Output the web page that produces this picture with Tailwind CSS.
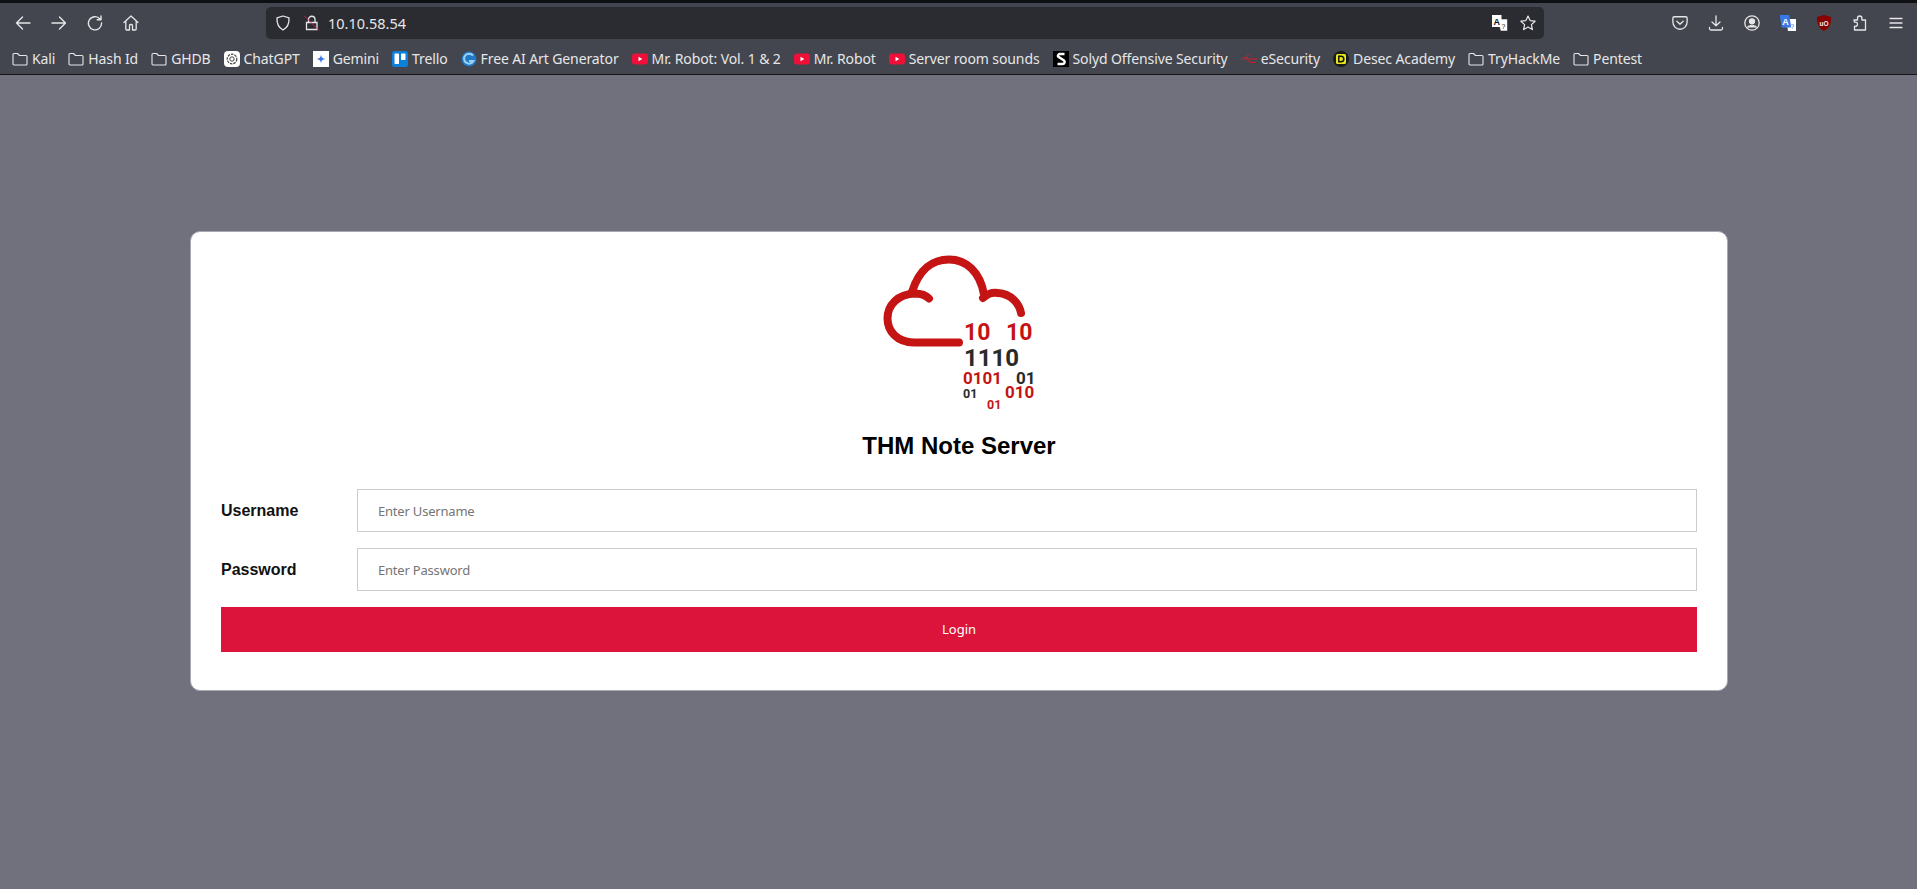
<!DOCTYPE html>
<html lang="en">
<head>
    <meta charset="UTF-8">
    <title>THM Note Server</title>
    <script src="https://cdn.jsdelivr.net/npm/@tailwindcss/browser@4"></script>
</head>
<body class="bg-[#71717d] h-[889px] overflow-hidden font-['Noto_Sans',sans-serif]">
    <!-- browser chrome -->
    <header class="h-[75px] bg-[#43464e] border-b border-[#15161a] text-[#e6e6e8]">
        <div class="h-[3px] bg-[#0f1013]"></div>
        <div class="h-[40px] flex items-center">
            <div class="w-[266px] flex items-center pl-[15px] gap-[20px] text-[#e6e6e8]">
                <svg class="w-[16px] h-[16px]" viewBox="0 0 16 16" fill="none" stroke="currentColor" stroke-width="1.4" stroke-linecap="round" stroke-linejoin="round"><path d="M15 8H1.500M7.500 2 1.500 8l6 6"/></svg>
                <svg class="w-[16px] h-[16px]" viewBox="0 0 16 16" fill="none" stroke="currentColor" stroke-width="1.4" stroke-linecap="round" stroke-linejoin="round"><path d="M1 8h13.500M8.500 2l6 6-6 6"/></svg>
                <svg class="w-[16px] h-[16px]" viewBox="0 0 16 16" fill="none" stroke="currentColor" stroke-width="1.4" stroke-linecap="round" stroke-linejoin="round"><path d="M13.200 4.200A6.600 6.600 0 1 0 14.600 8M14 1v3.800h-3.800"/></svg>
                <svg class="w-[16px] h-[16px]" viewBox="0 0 16 16" fill="none" stroke="currentColor" stroke-width="1.300" stroke-linecap="round" stroke-linejoin="round"><path d="M1 7.500 8 1l7 6.500M2.800 6v8a1 1 0 0 0 1 1h2.700v-4.500a1 1 0 0 1 1-1h1a1 1 0 0 1 1 1V15h2.700a1 1 0 0 0 1-1V6"/></svg>
            </div>
            <div class="w-[1278px] h-[32px] rounded-[5px] bg-[#2b2c31] flex items-center pl-[9px] pr-[8px]">
                <svg class="w-[16px] h-[16px]" viewBox="0 0 16 16" fill="none" stroke="currentColor" stroke-width="1.300" stroke-linejoin="round"><path d="M8 1 2 2.800c-.3 5.500 1 9.700 6 12.200 5-2.500 6.300-6.700 6-12.200z"/></svg>
                <svg class="w-[16px] h-[16px] ml-[13px]" viewBox="0 0 16 16" fill="none" stroke-linecap="round"><path d="M4.500 7V4.500a3 3 0 0 1 6.500 0V7M2.500 7.500h10.500v7H2.500z" stroke="currentColor" stroke-width="1.300"/><path d="M.5 1 14.500 15" stroke="#e22850" stroke-width=".8"/></svg>
                <span class="ml-[8px] text-[14.5px] leading-none">10.10.58.54</span>
                <div class="ml-auto flex items-center gap-[12px]">
                    <svg class="w-[16px] h-[16px]" viewBox="0 0 16 16"><path d="M5.500 4h10v12h-7z" fill="#fff" stroke="#2b2c31" stroke-width=".6"/><path d="M0 0h9.500v12H0z" fill="#fff"/><text x="1.500" y="9.500" font-size="9" font-weight="700" font-family="Liberation Sans" fill="#111">A</text><text x="9.500" y="13.500" font-size="7" font-family="Liberation Sans" fill="#111">?</text></svg>
                    <svg class="w-[16px] h-[16px]" viewBox="0 0 16 16" fill="none" stroke="currentColor" stroke-width="1.200" stroke-linejoin="round"><path d="m8 1 2.100 4.600 5 .6-3.700 3.400 1 5L8 12.100l-4.400 2.500 1-5L.9 6.200l5-.6z"/></svg>
                </div>
            </div>
            <div class="flex-1 flex items-center pl-[128px] gap-[20px]">
                <svg class="w-[16px] h-[16px]" viewBox="0 0 18 18" fill="none" stroke="currentColor" stroke-width="1.500" stroke-linecap="round" stroke-linejoin="round"><path d="M2.500 2h13A1.500 1.500 0 0 1 17 3.500V8A8 8 0 0 1 1 8V3.500A1.500 1.500 0 0 1 2.500 2zM5.500 7 9 10.300 12.500 7"/></svg>
                <svg class="w-[16px] h-[16px]" viewBox="0 0 16 16" fill="none" stroke="currentColor" stroke-width="1.300" stroke-linecap="round" stroke-linejoin="round"><path d="M8 1v9.500M4 7l4 3.700L12 7M1.500 12.500v1a1.500 1.500 0 0 0 1.500 1.500h10a1.500 1.500 0 0 0 1.500-1.500v-1"/></svg>
                <svg class="w-[16px] h-[16px]" viewBox="0 0 16 16" fill="none" stroke="currentColor" stroke-width="1.300"><circle cx="8" cy="8" r="7.200"/><circle cx="8" cy="6.300" r="2.500" fill="currentColor"/><path d="M3.500 12.500c1-2.500 8-2.500 9 0" fill="currentColor"/></svg>
                <svg class="w-[16px] h-[17px]" viewBox="0 0 16 17"><path d="M6 4h10v12H8z" fill="#fff"/><path d="M0 0h9.500l2 12.500H2z" fill="#3b78e7" transform="translate(-.3 0)"/><text x="2.200" y="9.500" font-size="9" font-weight="700" font-family="Liberation Sans" fill="#fff">A</text><text x="10.300" y="14" font-size="7" font-family="Liberation Sans" fill="#3b78e7">?</text></svg>
                <svg class="w-[16px] h-[16px]" viewBox="0 0 16 16"><path d="M8 0 15 2c.3 7-2 11.500-7 14C3 13.500.7 9 1 2z" fill="#800"/><text x="8" y="10.500" text-anchor="middle" font-size="6.500" font-weight="700" font-family="Liberation Sans" fill="#eee">uO</text></svg>
                <svg class="w-[16px] h-[16px]" viewBox="0 0 16 16" fill="none" stroke="currentColor" stroke-width="1.300" stroke-linejoin="round"><path d="M2 5h3.500V3.200a2.200 2.200 0 0 1 4.400 0V5h3.600v10H2.500v-3.800c2 .5 3-.7 3-2s-1-2.500-3-2z"/></svg>
                <svg class="w-[16px] h-[16px]" viewBox="0 0 16 16" fill="none" stroke="currentColor" stroke-width="1.300" stroke-linecap="round"><path d="M2 3.500h12M2 8h12M2 12.500h12"/></svg>
            </div>
        </div>
        <nav class="h-[31px] flex items-center pl-[12px] gap-[13px] text-[14px] tracking-[-0.11px] leading-none whitespace-nowrap">
            <a class="flex items-center gap-[4px]"><svg class="w-[16px] h-[16px]" viewBox="0 0 16 16" fill="none" stroke="currentColor" stroke-width="1.100" stroke-linejoin="round"><path d="M1 3.500A1 1 0 0 1 2 2.500h3.500l2 2H14a1 1 0 0 1 1 1V13a1 1 0 0 1-1 1H2a1 1 0 0 1-1-1z"/></svg>Kali</a>
            <a class="flex items-center gap-[4px]"><svg class="w-[16px] h-[16px]" viewBox="0 0 16 16" fill="none" stroke="currentColor" stroke-width="1.100" stroke-linejoin="round"><path d="M1 3.500A1 1 0 0 1 2 2.500h3.500l2 2H14a1 1 0 0 1 1 1V13a1 1 0 0 1-1 1H2a1 1 0 0 1-1-1z"/></svg>Hash Id</a>
            <a class="flex items-center gap-[4px]"><svg class="w-[16px] h-[16px]" viewBox="0 0 16 16" fill="none" stroke="currentColor" stroke-width="1.100" stroke-linejoin="round"><path d="M1 3.500A1 1 0 0 1 2 2.500h3.500l2 2H14a1 1 0 0 1 1 1V13a1 1 0 0 1-1 1H2a1 1 0 0 1-1-1z"/></svg>GHDB</a>
            <a class="flex items-center gap-[4px]"><svg class="w-[16px] h-[16px]" viewBox="0 0 16 16"><rect width="16" height="16" rx="4" fill="#fff"/><circle cx="8" cy="8" r="4.800" fill="none" stroke="#444" stroke-width="1.200" stroke-dasharray="2.500 1"/><circle cx="8" cy="8" r="2.200" fill="none" stroke="#444"/></svg>ChatGPT</a>
            <a class="flex items-center gap-[4px]"><svg class="w-[16px] h-[16px]" viewBox="0 0 16 16"><rect width="16" height="16" fill="#fff"/><path d="M8 3.500C8.300 6.500 9.500 7.700 12.500 8 9.500 8.300 8.300 9.500 8 12.500 7.700 9.500 6.500 8.300 3.500 8 6.500 7.700 7.700 6.500 8 3.500z" fill="#3b78e7"/></svg>Gemini</a>
            <a class="flex items-center gap-[4px]"><svg class="w-[16px] h-[16px]" viewBox="0 0 16 16"><rect width="16" height="16" rx="2.500" fill="#0c7fd6"/><rect x="2.500" y="2.500" width="4.500" height="10.500" rx=".8" fill="#fff"/><rect x="9" y="2.500" width="4.500" height="6.500" rx=".8" fill="#fff"/></svg>Trello</a>
            <a class="flex items-center gap-[4px]"><svg class="w-[16px] h-[16px]" viewBox="0 0 16 16"><circle cx="8" cy="8" r="7.500" fill="#2378c4"/><path d="M12 4.500A5 5 0 1 0 12.500 10H8" fill="none" stroke="#9ad2f5" stroke-width="2"/></svg>Free AI Art Generator</a>
            <a class="flex items-center gap-[4px]"><svg class="w-[16px] h-[16px]" viewBox="0 0 16 16"><rect y="2.500" width="16" height="11" rx="3" fill="#f00f38"/><path d="M6.500 5.800v4.400L10.300 8z" fill="#fff"/></svg>Mr. Robot: Vol. 1 &amp; 2</a>
            <a class="flex items-center gap-[4px]"><svg class="w-[16px] h-[16px]" viewBox="0 0 16 16"><rect y="2.500" width="16" height="11" rx="3" fill="#f00f38"/><path d="M6.500 5.800v4.400L10.300 8z" fill="#fff"/></svg>Mr. Robot</a>
            <a class="flex items-center gap-[4px]"><svg class="w-[16px] h-[16px]" viewBox="0 0 16 16"><rect y="2.500" width="16" height="11" rx="3" fill="#f00f38"/><path d="M6.500 5.800v4.400L10.300 8z" fill="#fff"/></svg>Server room sounds</a>
            <a class="flex items-center gap-[4px]"><svg class="w-[16px] h-[16px]" viewBox="0 0 16 16"><rect width="16" height="16" fill="#000"/><path d="M11.500 3H7a2 2 0 0 0-2 2.500L11 9.500a2 2 0 0 1-1.500 3.500H4.500" fill="none" stroke="#fff" stroke-width="2.400"/></svg>Solyd Offensive Security</a>
            <a class="flex items-center gap-[4px]"><svg class="w-[16px] h-[16px]" viewBox="0 0 16 16" fill="none" stroke="#e0202c"><path d="M0 8h16M3 6.500h4M6 5l4-2M7 9.500l3 2h5" stroke-dasharray="1.500 .6"/></svg>eSecurity</a>
            <a class="flex items-center gap-[4px]"><svg class="w-[16px] h-[16px]" viewBox="0 0 16 16"><circle cx="8" cy="8" r="8" fill="#1b1b1b"/><rect x="3" y="3" width="10" height="10" rx="1.500" fill="#e6e619"/><path d="M5.800 5.200h2.200a2.800 2.800 0 0 1 0 5.600H5.800z" fill="none" stroke="#111" stroke-width="1.500"/></svg>Desec Academy</a>
            <a class="flex items-center gap-[4px]"><svg class="w-[16px] h-[16px]" viewBox="0 0 16 16" fill="none" stroke="currentColor" stroke-width="1.100" stroke-linejoin="round"><path d="M1 3.500A1 1 0 0 1 2 2.500h3.500l2 2H14a1 1 0 0 1 1 1V13a1 1 0 0 1-1 1H2a1 1 0 0 1-1-1z"/></svg>TryHackMe</a>
            <a class="flex items-center gap-[4px]"><svg class="w-[16px] h-[16px]" viewBox="0 0 16 16" fill="none" stroke="currentColor" stroke-width="1.100" stroke-linejoin="round"><path d="M1 3.500A1 1 0 0 1 2 2.500h3.500l2 2H14a1 1 0 0 1 1 1V13a1 1 0 0 1-1 1H2a1 1 0 0 1-1-1z"/></svg>Pentest</a>
        </nav>
    </header>

    <main class="pt-[156px]">
        <div class="ml-[190px] w-[1538px] h-[460px] bg-white rounded-[10px] border border-[#a9a9b0] px-[30px] pt-[8px]">
            <svg class="block mx-auto" width="200" height="180" viewBox="0 0 200 180" font-family="Roboto" font-weight="700">
                <path d="M100 102.500H55C38 102.500 28.500 91 28.500 78.500 28.500 65 39 54 56 53.500c7 0 11 2 14 5" fill="none" stroke="#c41414" stroke-width="8" stroke-linecap="round"/>
                <path d="M53 52C60 29 74 19.500 90 19.500c17 0 31 12 35 35" fill="none" stroke="#c41414" stroke-width="8"/>
                <path d="M124 58c5-4 8-6 15-5 13 1 21 10 23 20" fill="none" stroke="#c41414" stroke-width="8" stroke-linecap="round"/>
                <text x="105" y="100" font-size="23" fill="#c41414">10</text>
                <text x="147" y="100" font-size="23" fill="#c41414">10</text>
                <text x="105" y="126" font-size="24" fill="#2a2a2a">1110</text>
                <text x="104" y="144" font-size="17" fill="#c41414">0101</text>
                <text x="157" y="144" font-size="17" fill="#2a2a2a">01</text>
                <text x="104" y="158" font-size="12.500" fill="#2a2a2a">01</text>
                <text x="146" y="158" font-size="17" fill="#c41414">010</text>
                <text x="128" y="169" font-size="12.500" fill="#c41414">01</text>
            </svg>
            <h1 class="text-center text-[24px] leading-[28px] font-bold text-black font-['Liberation_Sans',sans-serif] mt-[12px] mb-[29px]">THM Note Server</h1>
            <form>
                <div class="flex items-center mb-[16px]">
                    <label class="w-[136px] text-[16px] font-bold text-[#111] font-['Liberation_Sans',sans-serif]">Username</label>
                    <input type="text" placeholder="Enter Username" class="flex-1 h-[43px] border border-[#ccc] px-[20px] text-[13px] tracking-[-0.2px] outline-none placeholder:text-[#757575]">
                </div>
                <div class="flex items-center mb-[16px]">
                    <label class="w-[136px] text-[16px] font-bold text-[#111] font-['Liberation_Sans',sans-serif]">Password</label>
                    <input type="password" placeholder="Enter Password" class="flex-1 h-[43px] border border-[#ccc] px-[20px] text-[13px] tracking-[-0.2px] outline-none placeholder:text-[#757575]">
                </div>
                <button type="button" class="block w-full h-[45px] pt-[1px] bg-[#dc143c] text-white text-[13px]">Login</button>
            </form>
        </div>
    </main>
</body>
</html>
